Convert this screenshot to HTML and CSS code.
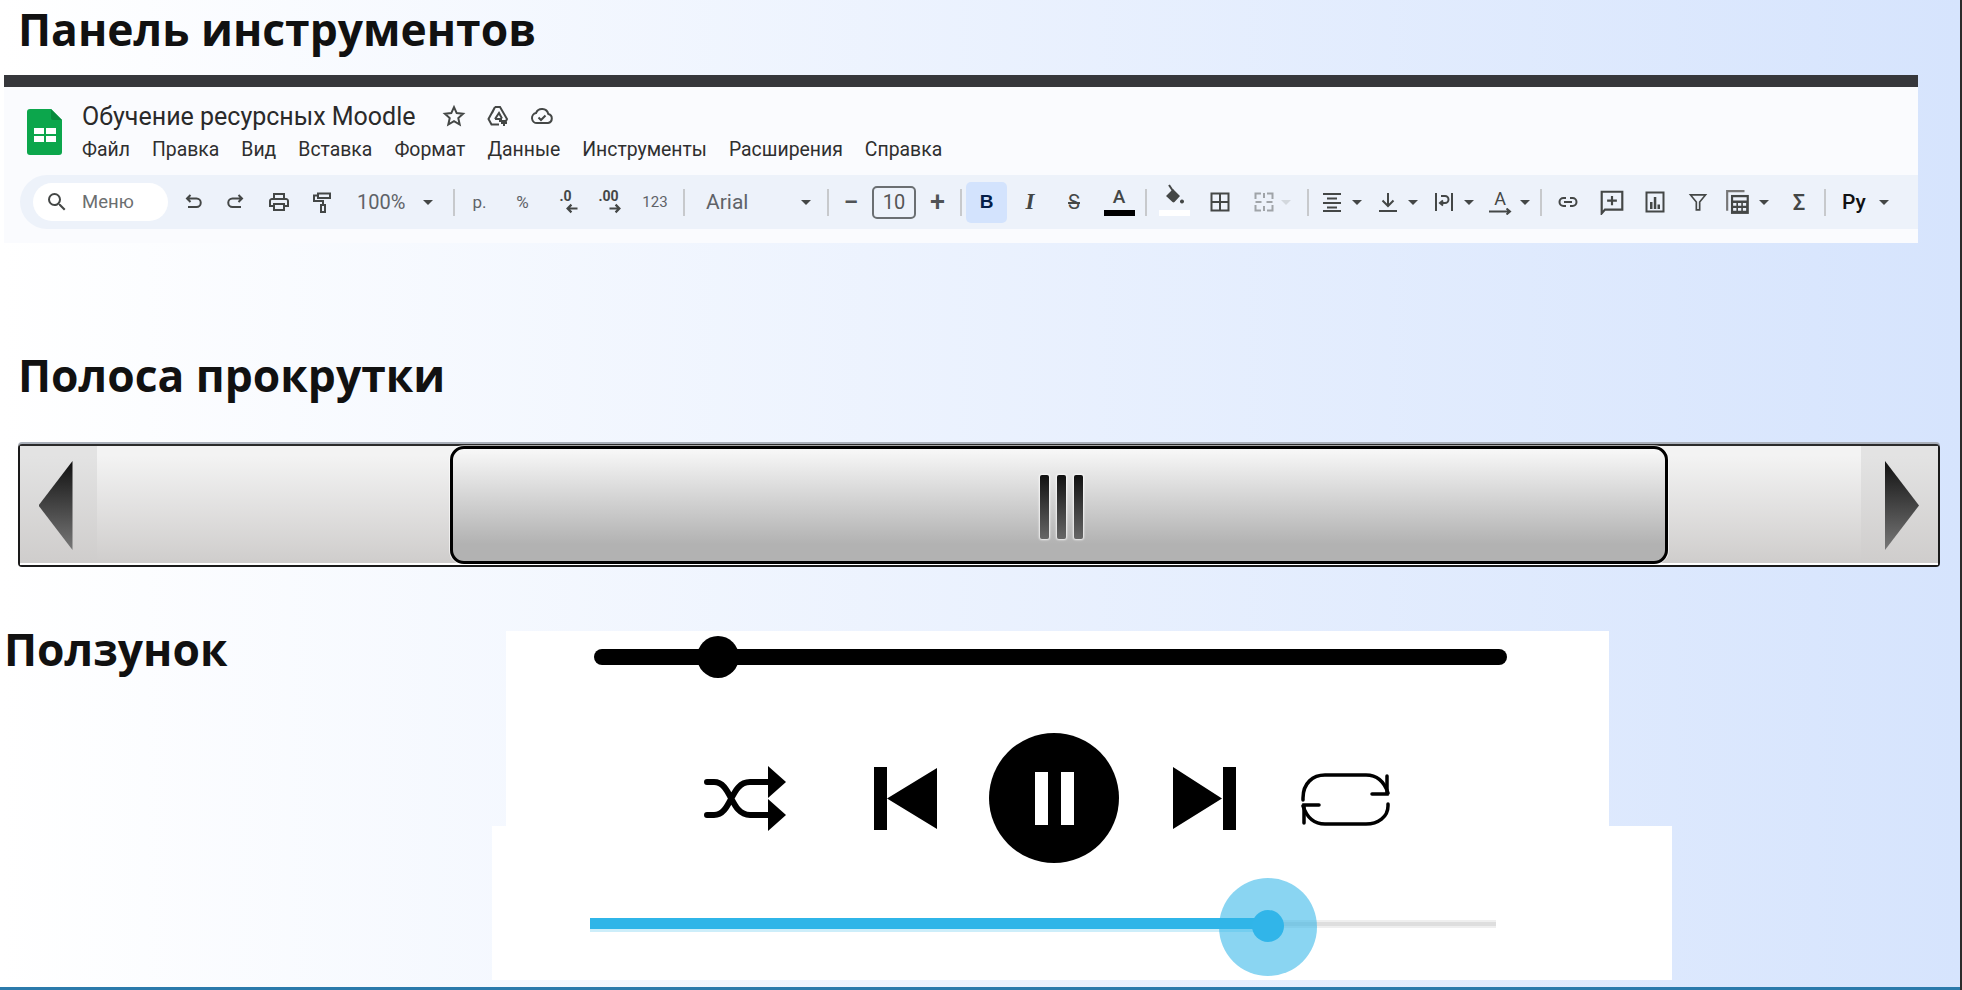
FILE: index.html
```html
<!DOCTYPE html>
<html lang="ru">
  <head>
    <meta charset="utf-8">
    <title>Панель инструментов</title>
    <link rel="stylesheet" href="styles.css">
  </head>

  <body>
    <div class="slide">
      <h2 class="heading first">Панель инструментов</h2>

      <div class="sheet">
        <div class="sheet-head">
          <svg class="logo" viewBox="0 0 35 46">
            <path d="M3 0H24L35 11V43A3 3 0 0 1 32 46H3A3 3 0 0 1 0 43V3A3 3 0 0 1 3 0Z" fill="#0ca64c"/>
            <path d="M24 0L35 11H26A2 2 0 0 1 24 9Z" fill="#078a3c"/>
            <path d="M7 19H29V33H7Z" fill="#fff"/>
            <path d="M7 25H29V27H7ZM17 19H19V33H17Z" fill="#0ca64c"/>
          </svg>
          <div class="doc">
            <div class="doc-title">
              <span class="doc-name">Обучение ресурсных Moodle</span>
              <svg class="ico star" viewBox="0 0 24 24"><path class="line" d="M12 3.2l2.7 5.9 6.4.7-4.8 4.3 1.4 6.4L12 17.2l-5.7 3.3 1.4-6.4-4.8-4.3 6.4-.7z"/></svg>
              <svg class="ico drive" viewBox="0 0 24 24"><path class="line" d="M9 3h5l7 12-1 2h-7M9 3L2.5 15l3 5.5H13M9 3l-3 6M9 15l4-6 3 5.5M9 15h7"/><path class="line" d="M18 16v6M15 19h6"/></svg>
              <svg class="ico cloud" viewBox="0 0 24 24"><path class="line" d="M7 19a5 5 0 0 1-1-9.9A6.5 6.5 0 0 1 18.3 10 4.6 4.6 0 0 1 18 19Z"/><path class="line" d="M8.5 13.5l2.5 2.5 4.5-4.5"/></svg>
            </div>
            <nav class="menu">
              <span>Файл</span>
              <span>Правка</span>
              <span>Вид</span>
              <span>Вставка</span>
              <span>Формат</span>
              <span>Данные</span>
              <span>Инструменты</span>
              <span>Расширения</span>
              <span>Справка</span>
            </nav>
          </div>
        </div>

        <div class="toolbar">
          <div class="search">
            <svg class="ico" viewBox="0 0 24 24"><path d="M15.5 14h-.79l-.28-.27A6.47 6.47 0 0 0 16 9.5 6.5 6.5 0 1 0 9.5 16c1.61 0 3.09-.59 4.23-1.57l.27.28v.79l5 4.99L20.49 19zm-6 0C7.01 14 5 11.99 5 9.5S7.01 5 9.5 5 14 7.01 14 9.5 11.99 14 9.5 14z"/></svg>
            <span>Меню</span>
          </div>

          <div class="btn"><svg class="ico" viewBox="0 0 24 24"><path class="line" d="M9.5 5L6 8.5 9.5 12M6 8.5H15.5a4 4 0 0 1 0 8.5H7"/></svg></div>
          <div class="btn"><svg class="ico" viewBox="0 0 24 24"><path class="line" d="M14.5 5L18 8.5 14.5 12M18 8.5H8.5a4 4 0 0 0 0 8.5H17"/></svg></div>
          <div class="btn"><svg class="ico" viewBox="0 0 24 24"><path d="M19 8h-1V3H6v5H5c-1.66 0-3 1.34-3 3v6h4v4h12v-4h4v-6c0-1.66-1.34-3-3-3zM8 5h8v3H8V5zm8 12v2H8v-4h8v2zm2-2v-2H6v2H4v-4c0-.55.45-1 1-1h14c.55 0 1 .45 1 1v4h-2z"/></svg></div>
          <div class="btn"><svg class="ico" viewBox="0 0 24 24"><path class="line" d="M8 3.5H20V8H8ZM8 5.5H4V11H13V15"/><path class="line" d="M11 15H15V22H11Z"/></svg></div>

          <div class="zoom"><span>100%</span><i class="caret"></i></div>
          <div class="sep"></div>

          <div class="btn txt">р.</div>
          <div class="btn txt">%</div>
          <div class="btn dec"><b>.0</b><svg viewBox="0 0 12 10"><path class="line" d="M11 5H2M5.5 1.5L2 5l3.5 3.5"/></svg></div>
          <div class="btn dec"><b>.00</b><svg viewBox="0 0 12 10"><path class="line" d="M1 5H10M6.5 1.5L10 5 6.5 8.5"/></svg></div>
          <div class="btn txt small w50">123</div>
          <div class="sep"></div>

          <div class="font"><span>Arial</span><i class="caret"></i></div>
          <div class="sep"></div>

          <div class="btn w38 size-op">−</div>
          <div class="size">10</div>
          <div class="btn w39 size-op">+</div>
          <div class="sep"></div>

          <div class="btn bold">B</div>
          <div class="btn italic">I</div>
          <div class="btn strike">S</div>
          <div class="btn color w46"><span>A</span><i class="swatch black"></i></div>
          <div class="sep"></div>

          <div class="btn fill w43">
            <svg class="ico" viewBox="0 0 24 24"><path class="line" d="M8 1l4 6"/><path d="M12 5l7 7-5.5 6a1.5 1.5 0 0 1-2 0L5 12zM21 15.5a2 2 0 1 1-.01 0z"/></svg>
            <i class="swatch white"></i>
          </div>
          <div class="btn w54"><svg class="ico" viewBox="0 0 24 24"><path class="line" d="M3.5 3.5H20.5V20.5H3.5ZM12 3.5V20.5M3.5 12H20.5"/></svg></div>
          <div class="btn w34 off"><svg class="ico" viewBox="0 0 24 24"><path class="line" d="M9 3.5H3.5V9M3.5 15V20.5H9M15 3.5H20.5V9M20.5 15V20.5H15M3.5 12H9.5M14.5 12H20.5M12 3V8M12 16V21"/></svg></div>
          <div class="caret-cell w23"><i class="caret off"></i></div>
          <div class="sep"></div>

          <div class="pair first-pair">
            <svg class="ico" viewBox="0 0 24 24"><path d="M3 3h18v2H3zM7 7.5h10v2H7zM3 12h18v2H3zM7 16.5h10v2H7zM3 20h18v2H3z"/></svg>
            <i class="caret"></i>
          </div>
          <div class="pair">
            <svg class="ico" viewBox="0 0 24 24"><path class="line" d="M12 3V16M6.5 10.5L12 16l5.5-5.5"/><path d="M3 20h18v2H3z"/></svg>
            <i class="caret"></i>
          </div>
          <div class="pair">
            <svg class="ico" viewBox="0 0 24 24"><path class="line" d="M4 3V21M20 3V21M9 6H13a3.5 3.5 0 0 1 0 7H8M11 10.5l-3 2.5 3 2.5"/></svg>
            <i class="caret"></i>
          </div>
          <div class="pair last-pair">
            <span class="text-rot"><span>A</span><svg viewBox="0 0 24 7"><path class="line" d="M1 3.5H22M18.5 .5L22 3.5 18.5 6.5"/></svg></span>
            <i class="caret"></i>
          </div>
          <div class="sep"></div>

          <div class="btn first-after"><svg class="ico" viewBox="0 0 24 24"><path class="line" d="M10 8H7.5a4 4 0 0 0 0 8H10M14 8h2.5a4 4 0 0 1 0 8H14M8 12H16"/></svg></div>
          <div class="btn"><svg class="ico big" viewBox="0 0 24 24"><path class="line" d="M2.5 2.5H21.5V19H5.5L2.5 22.5ZM12 6.5V15M7.5 10.75H16.5"/></svg></div>
          <div class="btn"><svg class="ico" viewBox="0 0 24 24"><path class="line" d="M3.5 2.5H20.5V21.5H3.5Z"/><path d="M7 12h2.5v7H7zM10.8 7h2.5v12h-2.5zM14.5 14.5H17V19h-2.5z"/></svg></div>
          <div class="btn"><svg class="ico funnel" viewBox="0 0 24 24"><path class="line" d="M3 3.5H21L14 12V21.5H10V12Z"/></svg></div>
          <div class="pair calc">
            <svg class="ico big" viewBox="0 0 24 24"><path class="line thin-line" d="M2 20V2H18"/><path d="M5.5 5.5H22V23H5.5Z"/><path fill="#edf2fa" d="M7.5 7.5h12.5v3H7.5zM7.5 13h3v2.5h-3zM12 13h3v2.5h-3zM16.5 13h3v2.5h-3zM7.5 17.5h3V20h-3zM12 17.5h3V20h-3zM16.5 17.5h3V20h-3z"/></svg>
            <i class="caret"></i>
          </div>
          <div class="btn sigma">Σ</div>
          <div class="sep"></div>

          <div class="lang"><span>Ру</span><i class="caret"></i></div>
        </div>
      </div>

      <h2 class="heading second">Полоса прокрутки</h2>

      <div class="scrollbar">
        <div class="sb-arrow"><i class="tri-left"></i></div>
        <div class="sb-track">
          <div class="sb-thumb">
            <i class="grip"></i>
            <i class="grip"></i>
            <i class="grip"></i>
          </div>
        </div>
        <div class="sb-arrow"><i class="tri-right"></i></div>
      </div>

      <div class="slider-row">
        <h2 class="heading third">Ползунок</h2>
        <div class="player">
          <div class="player-top">
            <div class="track"><i class="knob"></i></div>
            <div class="controls">
              <svg class="shuffle" viewBox="0 0 82 65">
                <path class="ctl-line" d="M3 16H10C28 16 26 49 46 49H66M3 49H10C28 49 26 16 46 16H66"/>
                <path d="M64 0L82 16 64 32ZM64 33L82 49 64 65Z"/>
              </svg>
              <svg class="prev" viewBox="0 0 63 63"><path d="M0 0H13V63H0ZM13 31.5L63 1V62Z"/></svg>
              <div class="pause"><i></i><i></i></div>
              <svg class="next" viewBox="0 0 63 63"><path d="M50 0H63V63H50ZM49 31.5L0 0V62Z"/></svg>
              <svg class="repeat" viewBox="0 0 89 53">
                <path class="rep-line" d="M2 27V25C2 10 12 2 24 2H65C75 2 83 8 87 20M87 31V33C87 44 77 51 65 51H24C14 51 6 45 2 33"/>
                <path class="rep-line" d="M86 3V21H71M3 50V32H18"/>
              </svg>
            </div>
          </div>
          <div class="player-bottom">
            <div class="seek">
              <i class="seek-fill"></i>
              <i class="seek-halo"></i>
              <i class="seek-dot"></i>
            </div>
          </div>
        </div>
      </div>

      <div class="bottom-line"></div>
    </div>
  </body>
</html>
```

FILE: styles.css
```css
/*styles.css*/
html,
body {
  margin: 0;
  height: 100%;
  overflow: hidden;
}

body {
  background: #2b2b2b;
  font-family: "Open Sans", sans-serif;
}

i {
  display: block;
}

.slide {
  width: 1960px;
  height: 990px;
  background: linear-gradient(90deg, #ffffff 0%, #d6e4fd 100%);
  display: flex;
  flex-direction: column;
}

.heading {
  margin: 0;
  font-size: 44.4px;
  font-weight: 700;
  color: #111;
  white-space: nowrap;
}

.heading.first {
  line-height: 58px;
  padding-left: 18px;
  margin-bottom: 17px;
}

.heading.second {
  line-height: 60px;
  padding-left: 18px;
  margin-top: 102px;
}

.heading.third {
  line-height: 36px;
  padding-left: 4px;
  box-sizing: border-box;
  width: 492px;
  flex: none;
}

/* spreadsheet toolbar */
.sheet {
  margin-left: 4px;
  width: 1914px;
  height: 156px;
  border-top: 12px solid #36373b;
  background: #fafbfe;
  font-family: Roboto, sans-serif;
  color: #444746;
}

.sheet-head {
  height: 88px;
  display: flex;
  padding-left: 23px;
  box-sizing: border-box;
}

.logo {
  width: 35px;
  height: 46px;
  margin-top: 22px;
  flex: none;
}

.doc {
  margin-left: 20px;
  padding-top: 14px;
}

.doc-title {
  display: flex;
  align-items: center;
  height: 30px;
}

.doc-name {
  font-size: 25px;
  color: #2a2a2a;
  margin-right: 26px;
  white-space: nowrap;
}

.doc-title .ico {
  margin-right: 20px;
}

.menu {
  display: flex;
  gap: 22px;
  margin-top: 8px;
  line-height: 22px;
  font-size: 19.4px;
  color: #2f2f2f;
  white-space: nowrap;
}

.toolbar {
  height: 54px;
  margin-left: 16px;
  background: #edf2fa;
  border-radius: 27px 0 0 27px;
  display: flex;
  align-items: center;
  padding-left: 13px;
}

.ico {
  width: 24px;
  height: 24px;
  flex: none;
  fill: #444746;
}

.ico.big {
  width: 26px;
  height: 26px;
}

.ico.funnel {
  width: 20px;
  height: 22px;
}

.line {
  fill: none;
  stroke: #444746;
  stroke-width: 2;
}

.thin-line {
  stroke: #777;
}

.search {
  width: 135px;
  height: 38px;
  margin-right: 3px;
  background: #fff;
  border-radius: 19px;
  display: flex;
  align-items: center;
  padding-left: 12px;
  box-sizing: border-box;
  font-size: 18.5px;
  color: #6b6e70;
  flex: none;
}

.search span {
  margin-left: 13px;
}

.btn {
  width: 43px;
  height: 41px;
  display: flex;
  align-items: center;
  justify-content: center;
  flex: none;
  position: relative;
}

.w23 { width: 23px; }
.w34 { width: 34px; }
.w38 { width: 38px; }
.w39 { width: 39px; }
.w43 { width: 43px; }
.w46 { width: 46px; }
.w50 { width: 50px; }
.w54 { width: 54px; }

.sep {
  width: 2px;
  height: 27px;
  margin: 0 3px;
  background: #c7c9cc;
  flex: none;
}

.caret {
  width: 0;
  height: 0;
  border-left: 5px solid transparent;
  border-right: 5px solid transparent;
  border-top: 5px solid #444746;
  flex: none;
}

.caret.off {
  border-top-color: #b4b7bb;
}

.caret-cell {
  height: 41px;
  display: flex;
  align-items: center;
  flex: none;
}

.zoom {
  width: 107px;
  display: flex;
  align-items: center;
  padding-left: 14px;
  box-sizing: border-box;
  font-size: 20px;
  color: #5f6368;
  flex: none;
}

.zoom .caret {
  margin-left: 18px;
}

.txt {
  font-size: 17px;
  color: #5f6368;
}

.txt.small {
  font-size: 15px;
}

.dec {
  flex-direction: column;
  color: #444746;
  font-size: 14px;
  line-height: 13px;
}

.dec svg {
  width: 14px;
  height: 11px;
  margin-left: 12px;
}

.font {
  width: 136px;
  padding: 0 13px 0 18px;
  box-sizing: border-box;
  display: flex;
  align-items: center;
  justify-content: space-between;
  font-size: 21px;
  color: #5f6368;
  flex: none;
}

.size-op {
  font-size: 27px;
  font-weight: 500;
  color: #505356;
}

.size {
  width: 44px;
  height: 33px;
  margin: 0 2px;
  border: 2px solid #6b6f72;
  border-radius: 5px;
  box-sizing: border-box;
  text-align: center;
  line-height: 29px;
  font-size: 20px;
  color: #555;
  flex: none;
}

.bold {
  width: 41px;
  margin: 0 1px;
  background: #d3e3fd;
  border-radius: 5px;
  font-family: "Liberation Sans", sans-serif;
  font-weight: 700;
  font-size: 19px;
  color: #041e49;
}

.italic {
  width: 44px;
  font-family: "Liberation Serif", serif;
  font-style: italic;
  font-weight: 700;
  font-size: 23px;
}

.strike {
  width: 44px;
  font-size: 20px;
  text-decoration: line-through;
}

.color span {
  font-size: 19px;
  font-weight: 500;
  margin-top: -11px;
}

.swatch {
  position: absolute;
  left: 50%;
  top: 28px;
  width: 31px;
  height: 6px;
  margin-left: -15px;
}

.swatch.black {
  background: #000;
}

.swatch.white {
  background: #fff;
  left: 24px;
}

.fill .ico {
  margin: -13px 0 0 2px;
}

.off {
  opacity: 0.45;
}

.pair {
  width: 50px;
  margin-right: 6px;
  display: flex;
  align-items: center;
  flex: none;
}

.pair .ico,
.pair .text-rot {
  margin: 0 4px;
}

.pair .caret {
  margin-left: 4px;
}

.first-pair {
  margin-left: 4px;
}

.last-pair {
  margin-right: 3px;
}

.text-rot {
  width: 24px;
  display: flex;
  flex-direction: column;
  align-items: center;
  font-size: 18px;
  line-height: 18px;
  flex: none;
}

.text-rot svg {
  width: 24px;
  height: 7px;
}

.first-after {
  width: 44px;
  margin-left: 1px;
}

.calc {
  margin-left: 2px;
  margin-right: 6px;
}

.sigma {
  width: 44px;
  font-size: 22px;
  font-weight: 500;
}

.lang {
  display: flex;
  align-items: center;
  padding-left: 13px;
  font-size: 21px;
  font-weight: 500;
  color: #111;
}

.lang .caret {
  margin-left: 13px;
}

/* scrollbar */
.scrollbar {
  margin: 39px 0 0 18px;
  width: 1922px;
  height: 123px;
  border: 2px solid #1a1a1a;
  border-top-color: #2a2a2a;
  border-radius: 4px;
  box-sizing: border-box;
  display: flex;
  background: linear-gradient(180deg, #f3f3f3 8%, #cfcdcc 98%, #ffffff 98%);
  box-shadow: 0 -2px 0 #aab0ba;
}

.sb-arrow {
  width: 77px;
  display: flex;
  align-items: center;
  justify-content: center;
  background: linear-gradient(180deg, #e3e3e3 8%, #cfcdcc 98%, #ffffff 98%);
  flex: none;
}

.tri-left,
.tri-right {
  width: 34px;
  height: 89px;
  background: linear-gradient(180deg, #111 0%, #777 100%);
  filter: drop-shadow(0 0 1px #fff);
}

.tri-left {
  clip-path: polygon(100% 0, 0 50%, 100% 100%);
  margin-right: 6px;
}

.tri-right {
  clip-path: polygon(0 0, 100% 50%, 0 100%);
  margin-left: 5px;
}

.sb-track {
  flex: 1;
  padding-left: 353px;
}

.sb-thumb {
  width: 1218px;
  height: 118px;
  border: 3px solid #000;
  border-radius: 14px;
  box-sizing: border-box;
  background: linear-gradient(180deg, #f8f8f8 0%, #b2b2b2 85%);
  display: flex;
  align-items: center;
  justify-content: center;
  gap: 8px;
  padding: 4px 0 0 4px;
  box-shadow: 0 0 0 1px rgba(255, 255, 255, 0.6);
}

.grip {
  width: 9px;
  height: 64px;
  border-radius: 2px;
  background: linear-gradient(180deg, #111 0%, #666 100%);
  box-shadow: 0 0 2px 1px rgba(255, 255, 255, 0.8);
}

/* sliders */
.slider-row {
  display: flex;
  margin-top: 64px;
}

.player-top {
  margin-left: 14px;
  width: 1103px;
  height: 195px;
  padding-top: 18px;
  box-sizing: border-box;
  background: #fff;
}

.track {
  position: relative;
  margin-left: 88px;
  width: 913px;
  height: 16px;
  background: #000;
  border-radius: 8px;
}

.knob {
  position: absolute;
  left: 103px;
  top: -13px;
  width: 42px;
  height: 42px;
  background: #000;
  border-radius: 50%;
}

.controls {
  display: flex;
  align-items: center;
  margin-top: 68px;
  padding-left: 198px;
  height: 130px;
}

.controls svg {
  flex: none;
}

.shuffle {
  width: 82px;
  height: 65px;
}

.ctl-line {
  fill: none;
  stroke: #000;
  stroke-width: 6;
  stroke-linecap: round;
}

.prev {
  width: 63px;
  height: 63px;
  margin-left: 88px;
}

.pause {
  width: 130px;
  height: 130px;
  margin-left: 52px;
  background: #000;
  border-radius: 50%;
  display: flex;
  align-items: center;
  justify-content: center;
  gap: 13px;
  flex: none;
}

.pause i {
  width: 13px;
  height: 53px;
  background: #fff;
}

.next {
  width: 63px;
  height: 63px;
  margin-left: 54px;
}

.repeat {
  width: 89px;
  height: 53px;
  margin: 2px 0 0 65px;
}

.rep-line {
  fill: none;
  stroke: #000;
  stroke-width: 3.5;
  stroke-linecap: round;
}

.player-bottom {
  width: 1180px;
  height: 154px;
  padding: 94px 0 0 98px;
  box-sizing: border-box;
  background: #fff;
}

.seek {
  position: relative;
  width: 906px;
  height: 8px;
  background: linear-gradient(180deg, #efefef 30%, #dedede 30%, #dedede 70%, #efefef 70%);
}

.seek-fill {
  position: absolute;
  left: 0;
  top: -2px;
  width: 677px;
  height: 11px;
  background: #2fb5e8;
  box-shadow: 0 3px 0 #cdeefa;
}

.seek-halo {
  position: absolute;
  left: 629px;
  top: -42px;
  width: 98px;
  height: 98px;
  background: rgba(49, 181, 233, 0.57);
  border-radius: 50%;
}

.seek-dot {
  position: absolute;
  left: 662px;
  top: -10px;
  width: 32px;
  height: 32px;
  background: #31b5e9;
  border-radius: 50%;
}

.bottom-line {
  margin-top: 7px;
  height: 3px;
  background: #2b7aab;
}
```
